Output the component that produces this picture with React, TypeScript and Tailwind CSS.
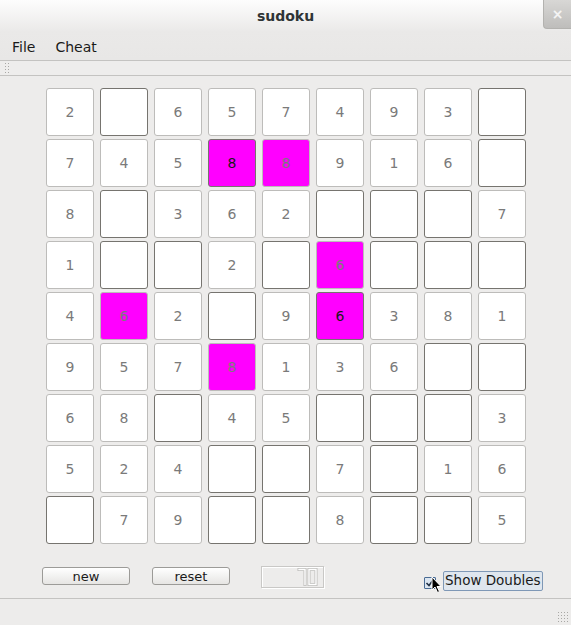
import { Fragment } from "react";

type Cell = { v: string; given: boolean; dup?: boolean };

// "" = empty (editable), digit = given, "*d" = duplicate given, "!d" = duplicate entered
const rows = [
  ["2", "", "6", "5", "7", "4", "9", "3", ""],
  ["7", "4", "5", "!8", "*8", "9", "1", "6", ""],
  ["8", "", "3", "6", "2", "", "", "", "7"],
  ["1", "", "", "2", "", "*6", "", "", ""],
  ["4", "*6", "2", "", "9", "!6", "3", "8", "1"],
  ["9", "5", "7", "*8", "1", "3", "6", "", ""],
  ["6", "8", "", "4", "5", "", "", "", "3"],
  ["5", "2", "4", "", "", "7", "", "1", "6"],
  ["", "7", "9", "", "", "8", "", "", "5"],
];

const parse = (s: string): Cell => {
  if (s === "") return { v: "", given: false };
  if (s[0] === "*") return { v: s.slice(1), given: true, dup: true };
  if (s[0] === "!") return { v: s.slice(1), given: false, dup: true };
  return { v: s, given: true };
};

const SudokuCell = ({ cell }: { cell: Cell }) => {
  const base =
    "w-[48px] h-[48px] rounded-[3px] border flex items-center justify-center text-[14px]";
  const bg = cell.dup ? "bg-[#ff00ff]" : "bg-white";
  const border = cell.given ? "border-[#bdbcba]" : "border-[#76746f]";
  const text = cell.given ? "text-[#7a7a7a]" : "text-[#1a1a1a]";
  return <div className={`${base} ${bg} ${border} ${text}`}>{cell.v}</div>;
};

const Lcd = () => (
  <div className="w-[63px] h-[22px] border border-[#c9c8c6] shadow-[inset_1px_1px_0_#ffffff,1px_1px_0_#ffffff] flex items-center justify-end pr-[4px]">
    <svg width="22" height="18" viewBox="0 0 22 18">
      <g stroke="#bdbcba" strokeWidth="3" strokeLinecap="square" fill="none">
        <path d="M2 1.5 H8 V16.5" />
        <path d="M12 1.5 H19 V16.5 H12 Z" />
      </g>
      <g stroke="#ffffff" strokeWidth="1.4" strokeLinecap="square" fill="none">
        <path d="M2 1.5 H8 V16.5" />
        <path d="M12 1.5 H19 V16.5 H12 Z" />
      </g>
    </svg>
  </div>
);

const Grip = ({ cols, rowsN }: { cols: number; rowsN: number }) => (
  <div className="flex flex-col gap-[2px]">
    {Array.from({ length: rowsN }).map((_, r) => (
      <div key={r} className="flex gap-[2px] justify-end">
        {Array.from({ length: cols }).map((__, c) => (
          <span key={c} className="w-[1px] h-[1px] bg-[#a9a8a5]" />
        ))}
      </div>
    ))}
  </div>
);

export default function App() {
  return (
    <div
      className="w-[571px] h-[625px] bg-[#edeceb] flex flex-col overflow-hidden text-[#2e3436]"
      style={{ fontFamily: '"DejaVu Sans", sans-serif' }}
    >
      {/* title bar */}
      <div className="h-[32px] shrink-0 relative flex items-center justify-center bg-gradient-to-b from-[#fdfdfd] to-[#eae9e8]">
        <span className="text-[14px] font-bold text-[#2e3436]">sudoku</span>
        <div className="absolute right-0 top-0 w-[28px] h-[29px] rounded-bl-[4px] bg-gradient-to-b from-[#d8d7d5] to-[#bebdbb] border-l border-b border-[#b3b2af] flex items-center justify-center">
          <span className="text-[#f4f4f4] text-[14px] font-bold leading-none">×</span>
        </div>
      </div>

      {/* menu bar */}
      <div className="h-[29px] shrink-0 flex items-center gap-[20px] px-[12px] pt-[2px] text-[14px] text-[#1a1a1a] bg-gradient-to-b from-[#eae9e8] to-[#e8e7e6] border-b border-[#c4c3c1]">
        <span>File</span>
        <span>Cheat</span>
      </div>

      {/* toolbar */}
      <div className="h-[15px] shrink-0 flex items-center pl-[5px] border-b border-[#c4c3c1] bg-[#eeedec]">
        <Grip cols={2} rowsN={4} />
      </div>

      {/* board */}
      <div className="flex-1 flex flex-col">
        <div className="pt-[12px] pl-[46px]">
          <div className="grid grid-cols-[repeat(9,48px)] gap-x-[6px] gap-y-[3px]">
            {rows.map((r, i) => (
              <Fragment key={i}>
                {r.map((s, j) => (
                  <SudokuCell key={j} cell={parse(s)} />
                ))}
              </Fragment>
            ))}
          </div>
        </div>

        <div className="flex items-start mt-[22px] h-[24px]">
          <button className="ml-[42px] mt-[1px] w-[88px] h-[18px] rounded-[3px] border border-[#9c9b98] bg-gradient-to-b from-[#ffffff] to-[#e6e5e3] text-[13px] leading-none text-[#1a1a1a] flex items-center justify-center">
            new
          </button>
          <button className="ml-[22px] mt-[1px] w-[78px] h-[18px] rounded-[3px] border border-[#9c9b98] bg-gradient-to-b from-[#ffffff] to-[#e6e5e3] text-[13px] leading-none text-[#1a1a1a] flex items-center justify-center">
            reset
          </button>
          <div className="ml-[31px]">
            <Lcd />
          </div>
          <div className="ml-[100px] mt-[5px] relative flex items-center">
            <div className="w-[12px] h-[12px] mt-[4px] border border-[#4a6b93] bg-[#dbe5f0] rounded-[1px] flex items-center justify-center">
              <svg width="10" height="10" viewBox="0 0 10 10">
                <path d="M1.5 5 L4 7.5 L8.5 1.5" stroke="#1f2f44" strokeWidth="1.6" fill="none" />
              </svg>
            </div>
            <div className="ml-[7px] h-[20px] px-[1px] border border-[#7f98b6] rounded-[2px] bg-[#dfe6ee] text-[13.5px] leading-none text-[#1a1a1a] flex items-center">
              Show Doubles
            </div>
            <svg className="absolute left-[7px] top-[5px]" width="12" height="18" viewBox="0 0 12 18">
              <path d="M1 1 L1 14 L4 11 L6.5 16.5 L8.5 15.5 L6 10.5 L10 10.5 Z" fill="#000" stroke="#fff" strokeWidth="1" />
            </svg>
          </div>
        </div>

        <div className="flex-1" />
      </div>

      {/* status bar */}
      <div className="h-[27px] shrink-0 border-t border-[#c4c3c1] flex items-end justify-end pr-[3px] pb-[3px]">
        <Grip cols={4} rowsN={4} />
      </div>
    </div>
  );
}
